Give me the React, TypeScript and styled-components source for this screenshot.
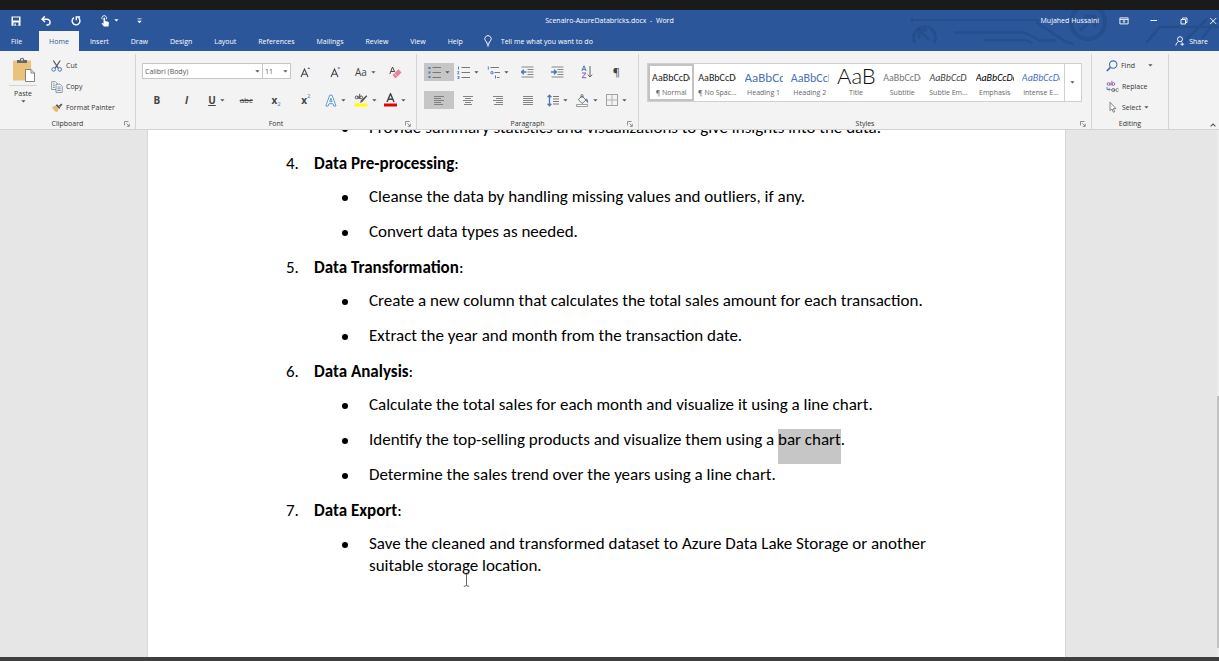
import React from 'react';
import styled, { createGlobalStyle, css } from 'styled-components';

const blue = '#2b579a';
const ink = '#444444';
const accent = '#4a78b8';
const docFont = "Carlito, Calibri, Lato, sans-serif";
const uiFont = "'Open Sans', 'Noto Sans', sans-serif";

const GlobalStyle = createGlobalStyle`
  * { box-sizing: border-box; }
  body { margin: 0; background: #e6e6e6; font-family: ${uiFont}; font-size: 7px; color: #333; }
  button, input, select { font: inherit; color: inherit; background: none; border: 0; padding: 0; margin: 0; border-radius: 0; }
  svg { display: block; flex: none; }
  ul, ol { list-style: none; margin: 0; padding: 0; }
`;

const Window = styled.div`
  display: flex;
  flex-direction: column;
  height: 100vh;
  overflow: hidden;
`;
const TopEdge = styled.div`
  flex: none;
  height: 10px;
  background: #1a1a1a;
`;
const BottomEdge = styled.div`
  flex: none;
  height: 4px;
  background: #3f3f40;
`;

/* ---------- header ---------- */
const Header = styled.header`
  position: relative;
  flex: none;
  background: ${blue};
  color: #fff;
`;
const Circuit = styled.svg`
  position: absolute;
  top: 0;
  right: 0;
`;
const TitleBar = styled.div`
  position: relative;
  display: grid;
  grid-template-columns: 1fr auto 1fr;
  align-items: center;
  height: 21px;
`;
const QuickAccess = styled.div`
  display: flex;
  align-items: center;
  gap: 18px;
  padding-left: 10px;
`;
const QuickButton = styled.button`
  display: flex;
  align-items: center;
  gap: 4px;
  height: 16px;
`;
const DocTitle = styled.h1`
  margin: 0;
  font-size: 7px;
  font-weight: 400;
  white-space: pre;
`;
const WindowControls = styled.div`
  display: flex;
  align-items: center;
  justify-content: flex-end;
  gap: 20px;
`;
const WindowButton = styled.button`
  display: flex;
  align-items: center;
  height: 16px;
`;
const TabBar = styled.nav`
  position: relative;
  display: flex;
  align-items: stretch;
  height: 20px;
`;
const Tab = styled.button<{ $active?: boolean; $file?: boolean }>`
  padding: 0 11px;
  ${p => p.$file && css`padding-right: 17px;`}
  ${p => p.$active && css`
    padding: 0 10px;
    background: #f3f3f3;
    color: ${blue};
  `}
`;
const TellMe = styled.label`
  display: flex;
  align-items: center;
  gap: 9px;
  margin-left: 10px;
  flex: 1;
`;
const TellMeInput = styled.input`
  width: 120px;
  outline: 0;
  &::placeholder { color: #fff; opacity: 1; }
`;
const ShareButton = styled.button`
  display: flex;
  align-items: center;
  gap: 4px;
  margin-right: 11px;
`;

/* ---------- ribbon ---------- */
const Ribbon = styled.section`
  flex: none;
  display: flex;
  height: 79px;
  padding-top: 3px;
  background: #f3f3f3;
  border-bottom: 1px solid #d2d2d2;
`;
const Group = styled.section<{ $width?: number }>`
  display: flex;
  flex-direction: column;
  ${p => (p.$width ? css`flex: none; width: ${p.$width}px;` : css`flex: 1; min-width: 0;`)}
  border-right: 1px solid #d4d4d4;
`;
const GroupBody = styled.div<{ $pad: string }>`
  flex: 1;
  display: flex;
  min-height: 0;
  padding: ${p => p.$pad};
`;
const GroupFooter = styled.footer`
  flex: none;
  display: grid;
  grid-template-columns: 16px 1fr 16px;
  align-items: center;
  height: 10px;
  line-height: 10px;
  text-align: center;
`;
const Launcher = styled.button`
  display: flex;
  grid-column: 3;
  justify-self: center;
`;
const GroupName = styled.span`
  grid-column: 2;
`;
const Rows = styled.div`
  flex: 1;
  display: flex;
  flex-direction: column;
  gap: 10px;
`;
const ToolRow = styled.div`
  display: flex;
  height: 18px;
`;
const Tool = styled.button<{ $on?: boolean }>`
  flex: 1;
  display: flex;
  align-items: center;
  justify-content: center;
  gap: 4px;
  color: ${ink};
  background: ${p => (p.$on ? '#c6c6c6' : 'transparent')};
`;
const Glyph = styled.span<{ $bold?: boolean; $italic?: boolean; $underline?: boolean; $strike?: boolean; $size?: number }>`
  font-size: ${p => p.$size ?? 10}px;
  line-height: 14px;
  font-weight: ${p => (p.$bold ? 700 : 400)};
  font-style: ${p => (p.$italic ? 'italic' : 'normal')};
  text-decoration: ${p => (p.$underline ? 'underline' : p.$strike ? 'line-through' : 'none')};
`;
const Script = styled.span<{ $raised?: boolean }>`
  align-self: ${p => (p.$raised ? 'flex-start' : 'flex-end')};
  margin-left: -4px;
  font-size: 6px;
  line-height: 10px;
  color: ${accent};
`;
const Combo = styled.span<{ $width: number }>`
  display: grid;
  flex: none;
  align-items: center;
  width: ${p => p.$width}px;
  height: 16px;
  background: #fff;
  border: 1px solid #c6c6c6;
  & + & { border-left: 0; }
`;
const ComboSelect = styled.select`
  grid-area: 1 / 1;
  appearance: none;
  width: 100%;
  height: 14px;
  padding-left: 2px;
  color: #555;
`;
const ComboCaret = styled.span`
  grid-area: 1 / 1;
  justify-self: end;
  margin-right: 2px;
  pointer-events: none;
`;
const PasteButton = styled.button`
  display: flex;
  flex-direction: column;
  align-items: center;
  align-self: flex-start;
  width: 28px;
  padding-top: 2px;
  line-height: 12px;
`;
const PasteIcon = styled.span`
  display: flex;
  justify-content: center;
  width: 28px;
  height: 29px;
  padding-left: 2px;
  margin-bottom: 2px;
  border-bottom: 1px solid #d4d4d4;
`;
const CommandList = styled.div<{ $gap?: number }>`
  display: flex;
  flex-direction: column;
  margin-left: ${p => p.$gap ?? 0}px;
`;
const Command = styled.button<{ $wide?: boolean }>`
  display: flex;
  flex: none;
  align-items: center;
  gap: 3px;
  height: 21px;
  & > :nth-child(3) { margin-left: ${p => (p.$wide ? 10 : 0)}px; }
`;

const Gallery = styled.div`
  flex: 1;
  display: flex;
  height: 39px;
  min-width: 0;
  background: #fff;
  border: 1px solid #d0d0d0;
`;
const StyleCard = styled.button<{ $on?: boolean }>`
  flex: 1 1 0;
  min-width: 0;
  display: flex;
  flex-direction: column;
  align-items: center;
  padding: 0 2px;
  color: #666;
  border: 2px solid ${p => (p.$on ? '#c3c3c3' : 'transparent')};
`;
type Look = 'body' | 'h1' | 'h2' | 'title' | 'subtitle' | 'subtle' | 'emphasis' | 'intense';
const looks = {
  body: css``,
  h1: css`font-size: 13px; color: #4a72b4;`,
  h2: css`font-size: 12px; color: #4a72b4;`,
  title: css`font-family: Lato, sans-serif; font-weight: 300; font-size: 22px; line-height: 20px; color: #111;`,
  subtitle: css`color: #777;`,
  subtle: css`font-style: italic; color: #444;`,
  emphasis: css`font-style: italic; color: #000;`,
  intense: css`font-style: italic; color: #4472c4;`,
};
const Sample = styled.span<{ $look: Look }>`
  width: 38px;
  height: 22px;
  line-height: 24px;
  overflow: hidden;
  white-space: nowrap;
  text-align: left;
  font-family: ${docFont};
  font-size: 10px;
  color: #222;
  ${p => looks[p.$look]}
`;
const StyleName = styled.span`
  line-height: 12px;
  white-space: nowrap;
`;
const MoreStyles = styled.button`
  flex: none;
  display: flex;
  align-items: center;
  justify-content: center;
  width: 17px;
  border-left: 1px solid #d0d0d0;
`;
const RibbonEnd = styled.div`
  flex: none;
  display: flex;
  align-items: flex-end;
  justify-content: flex-end;
  width: 50px;
  padding: 0 3px 2px 0;
`;

/* ---------- document ---------- */
const Workspace = styled.main`
  position: relative;
  flex: 1;
  display: flex;
  min-height: 0;
  overflow: hidden;
  background: #e6e6e6;
`;
const Canvas = styled.div`
  flex: 1;
  display: flex;
  justify-content: center;
  padding-right: 4px;
`;
const Page = styled.article`
  width: 100%;
  max-width: 919px;
  padding: 0 138px;
  background: #fff;
  border: solid #d6d6d6;
  border-width: 0 1px;
  font-family: ${docFont};
  font-size: 17px;
  color: #000;
`;
/* The page is scrolled part of the way into its first visible line. */
const Outline = styled.ol`
  margin-top: -13px;
`;
const Heading = styled.h2`
  display: grid;
  grid-template-columns: 28px 1fr;
  margin: 0 0 11px;
  font-size: 17px;
  line-height: 23px;
  font-weight: 400;
`;
const Bullets = styled.ul`
  padding-left: 56px;
`;
const Bullet = styled.li`
  display: grid;
  grid-template-columns: 27px 1fr;
  margin-bottom: 13px;
  line-height: 22px;
  &::before {
    content: '';
    width: 6px;
    height: 6px;
    margin-top: 9px;
    border-radius: 50%;
    background: #000;
  }
`;
const Selected = styled.mark`
  display: inline-block;
  padding-bottom: 13px;
  margin-bottom: -13px;
  background: #c6c6c6;
  color: inherit;
`;
const ScrollTrack = styled.div`
  display: grid;
  grid-template-rows: 266fr 252fr 9fr;
  width: 2px;
  background: #ececec;
`;
const ScrollThumb = styled.div`
  grid-row: 2;
  background: #dadada;
  border: 1px solid #c2c2c2;
`;
const TextCursor = styled.svg`
  position: absolute;
  left: 463px;
  top: 443px;
`;

/* ---------- icons ---------- */
const Caret = ({ color = '#555' }: { color?: string }) => (
  <svg width="5" height="3" viewBox="0 0 5 3"><path d="M0.3 0.3h4.2L2.4 2.6z" fill={color} /></svg>
);
const LaunchIcon = () => (
  <svg width="6" height="6" viewBox="0 0 6 6" fill="none" stroke="#777" strokeWidth="0.8">
    <path d="M0.5 4.5v-4h4M2.4 2.4l2.6 2.6M5.3 2.8v2.6H2.8" />
  </svg>
);
const SaveIcon = () => (
  <svg width="12" height="12" viewBox="0 0 12 12"><path fillRule="evenodd" fill="#fff" d="M1.5 1.5h9v9.3h-9zM3 2.5v3h6v-3zM3.5 7.5v3h1v-2h1.3v2h2.7v-3z" /></svg>
);
const UndoIcon = () => (
  <svg width="12" height="12" viewBox="0 0 12 12" fill="none" stroke="#fff" strokeWidth="1.4"><path d="M4.8 1.3L2 4.2l3 2.9M2.3 4.2H7a2.9 2.9 0 0 1 .3 5.8H6.4" /></svg>
);
const RedoIcon = () => (
  <svg width="12" height="12" viewBox="0 0 12 12" fill="none" stroke="#fff" strokeWidth="1.4"><path d="M4 2.6a3.9 3.9 0 1 0 4.6.4M6.3 5.2V2h3.8" /></svg>
);
const TouchIcon = () => (
  <svg width="10" height="12" viewBox="0 0 10 12">
    <path d="M2.2 4.3A2.4 2.4 0 1 1 6.3 4.3" fill="none" stroke="#fff" strokeWidth="0.9" />
    <path d="M3.5 3.2a.8.8 0 0 1 1.6 0V6l3 .8q.9.3.8 1.2l-.4 3.5H3.900L1.500 8.500q.5-.9 1.300-.3l.7.600z" fill="#fff" />
  </svg>
);
const CustomizeIcon = () => (
  <svg width="5" height="6" viewBox="0 0 5 6" fill="#fff"><path d="M0.5 0.5h4v.8h-4zM0.3 2.8h4.4L2.500 5.200z" /></svg>
);
const DisplayIcon = () => (
  <svg width="10" height="10" viewBox="0 0 10 10" fill="none" stroke="#fff" strokeWidth="0.9"><path d="M.9 1.9h8.2v6H.9zM.9 3.4h8.2M5 7V4.500M3.900 5.500L5 4.400l1.100 1.100" /></svg>
);
const MinimizeIcon = () => (
  <svg width="10" height="10" viewBox="0 0 10 10"><path d="M1.5 4.500h6.500" stroke="#fff" /></svg>
);
const RestoreIcon = () => (
  <svg width="10" height="10" viewBox="0 0 10 10" fill="none" stroke="#fff" strokeWidth="0.9"><path d="M2 3.5h4.5V8H2zM3.5 3.500V2H8v4.500H6.500" /></svg>
);
const CloseIcon = () => (
  <svg width="10" height="10" viewBox="0 0 10 10"><path d="M1.2 2l6 6M7.200 2l-6 6" stroke="#fff" strokeWidth="0.9" /></svg>
);
const BulbIcon = () => (
  <svg width="8" height="12" viewBox="0 0 8 12" fill="none" stroke="#fff" strokeWidth="0.9"><path d="M2.700 8.200Q2.700 7 1.600 5.900A3.200 3.200 0 1 1 6.400 5.900Q5.300 7 5.300 8.200zM2.800 9.700h2.400M3.100 11h1.800" /></svg>
);
const ShareIcon = () => (
  <svg width="10" height="10" viewBox="0 0 10 10" fill="none" stroke="#fff" strokeWidth="0.9"><circle cx="5" cy="3.2" r="2.5" /><path d="M.8 9.500Q1 6.600 3.500 5.600M6.300 5.500l.9.500M7.200 6.500v3.300M5.500 8.200h3.600" /></svg>
);
const ClipboardIcon = () => (
  <svg width="24" height="26" viewBox="0 0 24 26">
    <path d="M1 3.500h18v20H1z" fill="#eac27b" />
    <path d="M5 3h2.800a2.200 2.200 0 0 1 4.400 0H15v3H5z" fill="#666" />
    <circle cx="10" cy="2.800" r="1" fill="#f3f3f3" />
    <path d="M13.500 12.500h5.500l3.500 3.500v8.500h-9z" fill="#fff" stroke="#777" strokeWidth="0.9" />
    <path d="M19 12.500V16h3.500" fill="none" stroke="#777" strokeWidth="0.9" />
  </svg>
);
const CutIcon = () => (
  <svg width="12" height="12" viewBox="0 0 12 12" fill="none">
    <path d="M2.300.5l5 7.600M9.200.5l-5 7.600" stroke="#555" strokeWidth="1.2" />
    <circle cx="2.7" cy="9.4" r="1.8" stroke={accent} /><circle cx="8.8" cy="9.4" r="1.8" stroke={accent} />
  </svg>
);
const CopyIcon = () => (
  <svg width="12" height="12" viewBox="0 0 12 12" strokeWidth="0.8">
    <path d="M.7.700h3.600l1.700 1.700v6.100H.7z" fill="#fff" stroke="#777" />
    <path d="M5 3.200h4l2.200 2.200v6H5z" fill="#fff" stroke="#777" />
    <path d="M2 3h1.800M2 4.800h1.800M2 6.500h1.800M6.300 6h3.500M6.300 7.800h3.500M6.300 9.500h3.500" stroke={accent} />
  </svg>
);
const BrushIcon = () => (
  <svg width="12" height="10" viewBox="0 0 12 10">
    <path d="M1 4l3.500-1.200 3.300 3.300L6 9.300Q3 8.500 1 4z" fill="#eab96a" />
    <path d="M4.500 2.200l1.600-1 3.200 3.200-1 1.600z" fill="#555" /><path d="M7.800 2.600L10.500.600l.9.900-2 2.600z" fill="#555" />
  </svg>
);
const GrowA = ({ down }: { down?: boolean }) => (
  <svg width="11" height="12" viewBox="0 0 11 12" fill="none" stroke={ink}>
    <path d="M1 11L4.500 3l3.500 8M2.200 8.300h4.600" strokeWidth="1.1" />
    <path d={down ? 'M7.200 1.500h3.200L8.800 3.200z' : 'M7.200 3h3.200L8.800 1.300z'} fill={accent} stroke="none" />
  </svg>
);
const EraserIcon = () => (
  <svg width="13" height="13" viewBox="0 0 13 13">
    <path d="M.8 8L3.500 1l2.300 5M1.700 5.500h3.200" fill="none" stroke={ink} /><path d="M3.500 9l6-5.700 3 3.200L6.500 12.400z" fill="#e8829a" />
    <path d="M5.300 7.300l2.900 3.100" stroke="#f8dbe2" strokeWidth="0.7" />
  </svg>
);
const OutlineA = () => (
  <svg width="12" height="13" viewBox="0 0 12 13" fill="#fff" stroke="#5b9bd5"><path fillRule="evenodd" d="M.8 12L4.700 1.200h2.400L11 12H8.700L7.900 9.700H3.900L3.100 12zM4.700 7.700h2.500L5.900 4.200z" /></svg>
);
const HighlightIcon = () => (
  <svg width="14" height="14" viewBox="0 0 14 14">
    <g fill="none" stroke={ink} strokeWidth="0.9"><circle cx="2.6" cy="4.4" r="1.4" /><path d="M4.200 2.800V6M5.700.800v5.200" /><circle cx="7.2" cy="4.4" r="1.4" /></g>
    <path d="M12.300 2.200l1 1L8.500 8.800 6 10l.8-2.500z" fill="#555" /><path d="M.5 10.500h13v3H.5z" fill="#ff0" />
  </svg>
);
const FontColorIcon = () => (
  <svg width="13" height="14" viewBox="0 0 13 14"><path d="M3 9L6.500.800 10 9M4.200 6.300h4.600" fill="none" stroke={ink} strokeWidth="1.5" /><path d="M0 10.500h13v3H0z" fill="#e80000" /></svg>
);
const ListIcon = ({ numbered }: { numbered?: boolean }) => (
  <svg width="13" height="13" viewBox="0 0 13 13">
    <g fill={accent}>{numbered
      ? <path d="M1 .500h1v3H1zM.4 5.200h1.900v.8L1.200 7.600h1.100v.7H.3v-.8L1.400 6H.4zM.4 10h2v3h-2v-.7h1.200v-.5H.8v-.5h.8v-.5H.4z" />
      : <path d="M.5 1h2v2h-2zM.5 5.500h2v2h-2zM.5 10h2v2h-2z" />}</g>
    <path d="M4.500 1.500H13M4.500 6.500H13M4.500 11.500H13" stroke="#777" />
  </svg>
);
const MultiListIcon = () => (
  <svg width="13" height="13" viewBox="0 0 13 13" fill="none">
    <path d="M1.300.500v3M4 7.700V6.300q0-.8 1-.8t1 .8v1.400H4.400M8.500 9.500v3" stroke={accent} />
    <path d="M3.500 1.500H12M7.500 6.500H13M10 11.500h2.500" stroke="#777" />
  </svg>
);
const IndentIcon = ({ right }: { right?: boolean }) => (
  <svg width="13" height="12" viewBox="0 0 13 12" fill="none">
    <path d="M.5 1H12.500M6.500 3.500h6M6.500 6h6M6.500 8.500h6M.5 11h12" stroke="#888" />
    <path d={right ? 'M0 6h5M3 3.700L5.300 6 3 8.300' : 'M5.500 6h-5M2.800 3.700L.5 6l2.300 2.300'} stroke={accent} strokeWidth="1.5" />
  </svg>
);
const SortIcon = () => (
  <svg width="12" height="14" viewBox="0 0 12 14" fill="none">
    <path d="M.8 6L3 .800 5.200 6M1.500 4.400h3" stroke={accent} /><path d="M1 8h4L1 12.700h4.200" stroke="#8a5ba8" />
    <path d="M9 1v11M6.800 9.700L9 12l2.200-2.300" stroke="#666" />
  </svg>
);
const AlignIcon = ({ widths, anchor }: { widths: number[]; anchor: 'l' | 'c' | 'r' }) => (
  <svg width="12" height="11" viewBox="0 0 12 11">
    {widths.map((w, i) => (
      <path key={i} d={`M${anchor === 'l' ? 1 : anchor === 'r' ? 11 - w : 6 - w / 2} ${1.5 + i * 2}h${w}`} stroke="#777" strokeWidth="0.9" />
    ))}
  </svg>
);
const SpacingIcon = () => (
  <svg width="12" height="13" viewBox="0 0 12 13" fill="none">
    <path d="M2.500 1v11M.6 3.200L2.500 1.200l1.900 2M.6 9.800l1.900 2 1.900-2" stroke={accent} strokeWidth="1.3" />
    <path d="M6 2.500h6M6 5h6M6 7.500h6M6 10h6" stroke="#777" />
  </svg>
);
const BucketIcon = () => (
  <svg width="13" height="13" viewBox="0 0 13 13" fill="none">
    <path d="M2.300 5.500L6 2l4 4-4 3.500zM5 4V1.500q0-1 1-1t1 1V4" stroke="#666" strokeWidth="0.9" />
    <path d="M10 4.500q2.500.5 2 4.500-1.500-.5-2-3z" fill={accent} /><path d="M.5 10.500h11v2H.5z" fill="#fff" stroke="#888" strokeWidth="0.8" />
  </svg>
);
const BordersIcon = () => (
  <svg width="12" height="12" viewBox="0 0 12 12" fill="none"><path d="M.5.500h11v11H.5z" stroke="#999" strokeWidth="0.9" /><path d="M6 .500v11M.5 6h11" stroke="#aaa" strokeWidth="0.9" /></svg>
);
const FindIcon = () => (
  <svg width="12" height="12" viewBox="0 0 12 12" fill="none" stroke="#3c6eb0"><circle cx="7.2" cy="4.6" r="3.7" strokeWidth="1.1" /><path d="M4.400 7.400L.8 11" strokeWidth="1.6" /></svg>
);
const ReplaceIcon = () => (
  <svg width="13" height="13" viewBox="0 0 13 13" fill="none" strokeWidth="0.9">
    <g stroke="#8a5ba8"><circle cx="2.5" cy="4" r="1.4" /><path d="M4.100 2.600v2.900M5.900.800v4.700" /><circle cx="7.4" cy="4" r="1.4" /></g>
    <g stroke={accent}><path d="M1 7v2.500h3M2.900 8.200l1.300 1.300-1.300 1.300" /></g>
    <g stroke="#666"><circle cx="7" cy="10" r="1.4" /><path d="M8.600 8.600v3M12.500 9a1.500 1.500 0 1 0 0 2" /></g>
  </svg>
);
const SelectIcon = () => (
  <svg width="13" height="13" viewBox="0 0 13 13" fill="#fff" stroke="#777" strokeWidth="0.9"><path d="M4 1.200v8.500l2-1.700 1.400 3.300 1.300-.6-1.400-3.100h2.600z" /></svg>
);

const tabs = ['Insert', 'Draw', 'Design', 'Layout', 'References', 'Mailings', 'Review', 'View', 'Help'];

const styleCards: { sample: string; name: string; look: Look }[] = [
  { sample: 'AaBbCcDd', name: '¶ Normal', look: 'body' },
  { sample: 'AaBbCcDd', name: '¶ No Spac...', look: 'body' },
  { sample: 'AaBbCc', name: 'Heading 1', look: 'h1' },
  { sample: 'AaBbCcD', name: 'Heading 2', look: 'h2' },
  { sample: 'AaB', name: 'Title', look: 'title' },
  { sample: 'AaBbCcDd', name: 'Subtitle', look: 'subtitle' },
  { sample: 'AaBbCcDd', name: 'Subtle Em...', look: 'subtle' },
  { sample: 'AaBbCcDd', name: 'Emphasis', look: 'emphasis' },
  { sample: 'AaBbCcDd', name: 'Intense E...', look: 'intense' },
];

const sections: { number: string; title: string; items: React.ReactNode[] }[] = [
  { number: '4.', title: 'Data Pre-processing', items: [
    'Cleanse the data by handling missing values and outliers, if any.',
    'Convert data types as needed.',
  ] },
  { number: '5.', title: 'Data Transformation', items: [
    'Create a new column that calculates the total sales amount for each transaction.',
    'Extract the year and month from the transaction date.',
  ] },
  { number: '6.', title: 'Data Analysis', items: [
    'Calculate the total sales for each month and visualize it using a line chart.',
    <>Identify the top-selling products and visualize them using a <Selected>bar chart</Selected>.</>,
    'Determine the sales trend over the years using a line chart.',
  ] },
  { number: '7.', title: 'Data Export', items: [
    'Save the cleaned and transformed dataset to Azure Data Lake Storage or another suitable storage location.',
  ] },
];

const Footer = ({ name, launcher = true }: { name: string; launcher?: boolean }) => (
  <GroupFooter>
    <GroupName>{name}</GroupName>
    {launcher && <Launcher aria-label={`${name} settings`}><LaunchIcon /></Launcher>}
  </GroupFooter>
);

export default function App() {
  return (
    <Window>
      <GlobalStyle />
      <TopEdge />
      <Header>
        <Circuit width="319" height="41" viewBox="0 0 319 41" fill="none" stroke="#1d4580" strokeOpacity="0.45" aria-hidden="true">
          <path d="M12 10h134M12 7.500v5" strokeWidth="2" />
          <path d="M54 22.500h70l16 8h16M84 30h42l6 3M136 12l30 20 8 2M246 33l14-16h59M283 33l24-24M302 28l17-19" strokeWidth="2.5" />
          <path d="M15 33a11 11 0 1 1 19 0" strokeWidth="3" />
          <circle cx="188" cy="12" r="17" strokeWidth="4" />
          <path d="M19 29V20h8M20 21l9 9M180 21l14-14M184 6h11v11" strokeWidth="3" />
        </Circuit>
        <TitleBar>
          <QuickAccess>
            <QuickButton aria-label="Save"><SaveIcon /></QuickButton>
            <QuickButton aria-label="Undo"><UndoIcon /></QuickButton>
            <QuickButton aria-label="Redo"><RedoIcon /></QuickButton>
            <QuickButton aria-label="Touch mode"><TouchIcon /><Caret color="#fff" /></QuickButton>
            <QuickButton aria-label="Customize toolbar"><CustomizeIcon /></QuickButton>
          </QuickAccess>
          <DocTitle>Scenairo-AzureDatabricks.docx  -  Word</DocTitle>
          <WindowControls>
            <span>Mujahed Hussaini</span>
            <WindowButton aria-label="Ribbon display options"><DisplayIcon /></WindowButton>
            <WindowButton aria-label="Minimize"><MinimizeIcon /></WindowButton>
            <WindowButton aria-label="Restore"><RestoreIcon /></WindowButton>
            <WindowButton aria-label="Close"><CloseIcon /></WindowButton>
          </WindowControls>
        </TitleBar>
        <TabBar>
          <Tab $file>File</Tab>
          <Tab $active>Home</Tab>
          {tabs.map(t => <Tab key={t}>{t}</Tab>)}
          <TellMe>
            <BulbIcon />
            <TellMeInput aria-label="Tell me" placeholder="Tell me what you want to do" />
          </TellMe>
          <ShareButton><ShareIcon />Share</ShareButton>
        </TabBar>
      </Header>

      <Ribbon>
        <Group $width={136}>
          <GroupBody $pad="1px 0 0 9px">
            <PasteButton>
              <PasteIcon><ClipboardIcon /></PasteIcon>
              Paste
              <Caret />
            </PasteButton>
            <CommandList $gap={14}>
              <Command><CutIcon /><span>Cut</span></Command>
              <Command><CopyIcon /><span>Copy</span></Command>
              <Command><BrushIcon /><span>Format Painter</span></Command>
            </CommandList>
          </GroupBody>
          <Footer name="Clipboard" />
        </Group>

        <Group $width={281}>
          <GroupBody $pad="9px 6px 0 6px">
            <Rows>
              <ToolRow>
                <Combo $width={121}>
                  <ComboSelect aria-label="Font"><option>Calibri (Body)</option></ComboSelect>
                  <ComboCaret><Caret /></ComboCaret>
                </Combo>
                <Combo $width={28}>
                  <ComboSelect aria-label="Font size"><option>11</option></ComboSelect>
                  <ComboCaret><Caret /></ComboCaret>
                </Combo>
                <Tool aria-label="Grow font"><GrowA /></Tool>
                <Tool aria-label="Shrink font"><GrowA down /></Tool>
                <Tool><Glyph>Aa</Glyph><Caret /></Tool>
                <Tool aria-label="Clear formatting"><EraserIcon /></Tool>
              </ToolRow>
              <ToolRow>
                <Tool><Glyph $bold>B</Glyph></Tool>
                <Tool><Glyph $bold $italic>I</Glyph></Tool>
                <Tool><Glyph $bold $underline>U</Glyph><Caret /></Tool>
                <Tool><Glyph $strike $size={8}>abc</Glyph></Tool>
                <Tool><Glyph $bold>x</Glyph><Script>2</Script></Tool>
                <Tool><Glyph $bold>x</Glyph><Script $raised>2</Script></Tool>
                <Tool aria-label="Text effects"><OutlineA /><Caret /></Tool>
                <Tool aria-label="Highlight"><HighlightIcon /><Caret /></Tool>
                <Tool aria-label="Font color"><FontColorIcon /><Caret /></Tool>
              </ToolRow>
            </Rows>
          </GroupBody>
          <Footer name="Font" />
        </Group>

        <Group $width={222}>
          <GroupBody $pad="9px 7px 0 7px">
            <Rows>
              <ToolRow>
                <Tool $on aria-label="Bullets"><ListIcon /><Caret /></Tool>
                <Tool aria-label="Numbering"><ListIcon numbered /><Caret /></Tool>
                <Tool aria-label="Multilevel list"><MultiListIcon /><Caret /></Tool>
                <Tool aria-label="Decrease indent"><IndentIcon /></Tool>
                <Tool aria-label="Increase indent"><IndentIcon right /></Tool>
                <Tool aria-label="Sort"><SortIcon /></Tool>
                <Tool><Glyph $size={11}>¶</Glyph></Tool>
              </ToolRow>
              <ToolRow>
                <Tool $on aria-label="Align left"><AlignIcon anchor="l" widths={[10, 7, 10, 7, 9]} /></Tool>
                <Tool aria-label="Center"><AlignIcon anchor="c" widths={[10, 6, 10, 6, 8]} /></Tool>
                <Tool aria-label="Align right"><AlignIcon anchor="r" widths={[10, 7, 10, 7, 9]} /></Tool>
                <Tool aria-label="Justify"><AlignIcon anchor="l" widths={[10, 10, 10, 10, 10]} /></Tool>
                <Tool aria-label="Line spacing"><SpacingIcon /><Caret /></Tool>
                <Tool aria-label="Shading"><BucketIcon /><Caret /></Tool>
                <Tool aria-label="Borders"><BordersIcon /><Caret /></Tool>
              </ToolRow>
            </Rows>
          </GroupBody>
          <Footer name="Paragraph" />
        </Group>

        <Group>
          <GroupBody $pad="9px 9px 0 8px">
            <Gallery>
              {styleCards.map((s, i) => (
                <StyleCard key={s.name} $on={i === 0}>
                  <Sample $look={s.look}>{s.sample}</Sample>
                  <StyleName>{s.name}</StyleName>
                </StyleCard>
              ))}
              <MoreStyles aria-label="More styles"><Caret /></MoreStyles>
            </Gallery>
          </GroupBody>
          <Footer name="Styles" />
        </Group>

        <Group $width={77}>
          <GroupBody $pad="1px 0 0 14px">
            <CommandList>
              <Command $wide><FindIcon /><span>Find</span><Caret /></Command>
              <Command><ReplaceIcon /><span>Replace</span></Command>
              <Command><SelectIcon /><span>Select</span><Caret /></Command>
            </CommandList>
          </GroupBody>
          <Footer name="Editing" launcher={false} />
        </Group>
        <RibbonEnd>
          <button aria-label="Collapse ribbon">
            <svg width="6" height="4" viewBox="0 0 6 4"><path d="M.6 3.400L3 1l2.400 2.400" fill="none" stroke="#555" strokeWidth="1.1" /></svg>
          </button>
        </RibbonEnd>
      </Ribbon>

      <Workspace>
        <Canvas>
          <Page>
            <Outline>
              <li>
                <Bullets>
                  <Bullet><span>Provide summary statistics and visualizations to give insights into the data.</span></Bullet>
                </Bullets>
              </li>
              {sections.map(s => (
                <li key={s.number}>
                  <Heading><span>{s.number}</span><span><b>{s.title}</b>:</span></Heading>
                  <Bullets>
                    {s.items.map((item, i) => <Bullet key={i}><span>{item}</span></Bullet>)}
                  </Bullets>
                </li>
              ))}
            </Outline>
          </Page>
        </Canvas>
        <ScrollTrack><ScrollThumb /></ScrollTrack>
        <TextCursor width="7" height="14" viewBox="0 0 7 14" fill="none" stroke="#555" strokeWidth="0.9" aria-hidden="true">
          <path d="M.8.700q2.700-.2 2.700 1.300v10q0 1.500-2.700 1.300M6.200.700Q3.500.500 3.500 2M6.200 13.300Q3.500 13.500 3.500 12" />
        </TextCursor>
      </Workspace>
      <BottomEdge />
    </Window>
  );
}
